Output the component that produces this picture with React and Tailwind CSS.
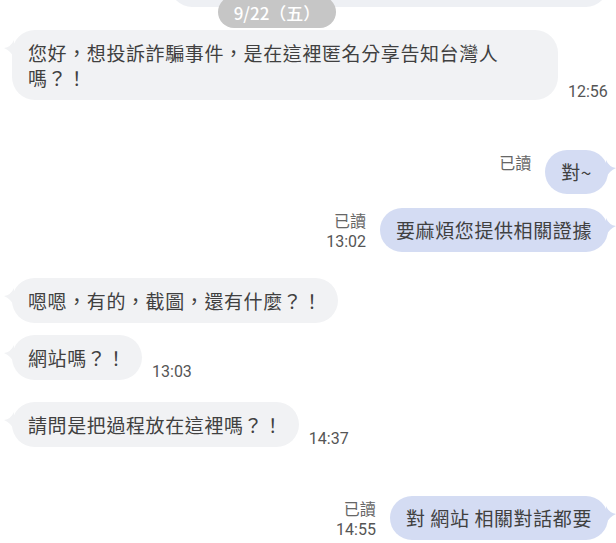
import React from 'react';

const cjk = { fontFamily: '"Noto Sans CJK TC", "Noto Sans", sans-serif' };

const TailLeft = () => (
  <svg className="absolute left-[-8px] top-[10px]" width="10" height="18" viewBox="0 0 10 18">
    <path d="M10 0 Q7 7 0 8 Q7 11 10 18 Z" fill="#f1f2f4" />
  </svg>
);

const TailRight = () => (
  <svg className="absolute right-[-8px] top-[10px]" width="10" height="18" viewBox="0 0 10 18">
    <path d="M0 0 Q3 7 10 8 Q3 11 0 18 Z" fill="#d4dcf3" />
  </svg>
);

const LeftMsg = ({ text, time, className = '' }) => (
  <div className={`flex items-end pl-[12px] ${className}`}>
    <div className="relative max-w-[546px] rounded-[23px] bg-[#f1f2f4] px-4 py-[10px] text-[19px] leading-[25px] tracking-[0.6px] text-[#404040]">
      <TailLeft />
      {text}
    </div>
    {time && (
      <div className="mb-[-2px] ml-[10px] text-[16px] leading-[20px] text-[#555]" style={{ fontFamily: 'Roboto, "Liberation Sans", sans-serif' }}>
        {time}
      </div>
    )}
  </div>
);

const RightMsg = ({ text, time, className = '' }) => (
  <div className={`flex items-end justify-end pr-[8px] ${className}`}>
    <div className="mr-[14px] flex flex-col items-end text-[16px] leading-[20px] text-[#555]" style={{ fontFamily: 'Roboto, "Liberation Sans", "Noto Sans CJK TC", sans-serif' }}>
      <span className="text-[#666]">已讀</span>
      <span className="h-[20px]">{time}</span>
    </div>
    <div className="relative rounded-[22px] bg-[#d4dcf3] px-4 py-[10px] text-[19px] leading-[24px] tracking-[0.6px] text-[#404040]">
      <TailRight />
      {text}
    </div>
  </div>
);

export default function App() {
  return (
    <div lang="zh-Hant-TW" className="relative h-[543px] w-[616px] overflow-hidden bg-white" style={cjk}>
      <div className="flex flex-col">
        {/* previous message, scrolled mostly out of view */}
        <div className="mt-[-37px] flex items-end justify-end pr-[8px]">
          <div className="mb-[4px] mr-[20px] text-[16px] leading-[20px] text-[#555]" style={{ fontFamily: 'Roboto, "Liberation Sans", sans-serif' }}>
            12:55
          </div>
          <div className="h-[44px] w-[438px] rounded-[22px] bg-[#eef0f4]" />
        </div>

        <LeftMsg className="mt-[23px]" text="您好，想投訴詐騙事件，是在這裡匿名分享告知台灣人嗎？！" time="12:56" />
        <RightMsg className="mt-[50px]" text="對~" />
        <RightMsg className="mt-[14px]" text="要麻煩您提供相關證據" time="13:02" />
        <LeftMsg className="mt-[26px]" text="嗯嗯，有的，截圖，還有什麼？！" />
        <LeftMsg className="mt-[12px]" text="網站嗎？！" time="13:03" />
        <LeftMsg className="mt-[22px]" text="請問是把過程放在這裡嗎？！" time="14:37" />
        <RightMsg className="mt-[49px]" text="對 網站 相關對話都要" time="14:55" />
      </div>

      {/* sticky date header */}
      <div className="absolute left-[218px] top-[-4px] flex h-[32px] w-[118px] items-center justify-center rounded-full bg-[#c6c6c6] pt-[2px] text-[17px] font-medium text-white">
        9/22（五）
      </div>
    </div>
  );
}
